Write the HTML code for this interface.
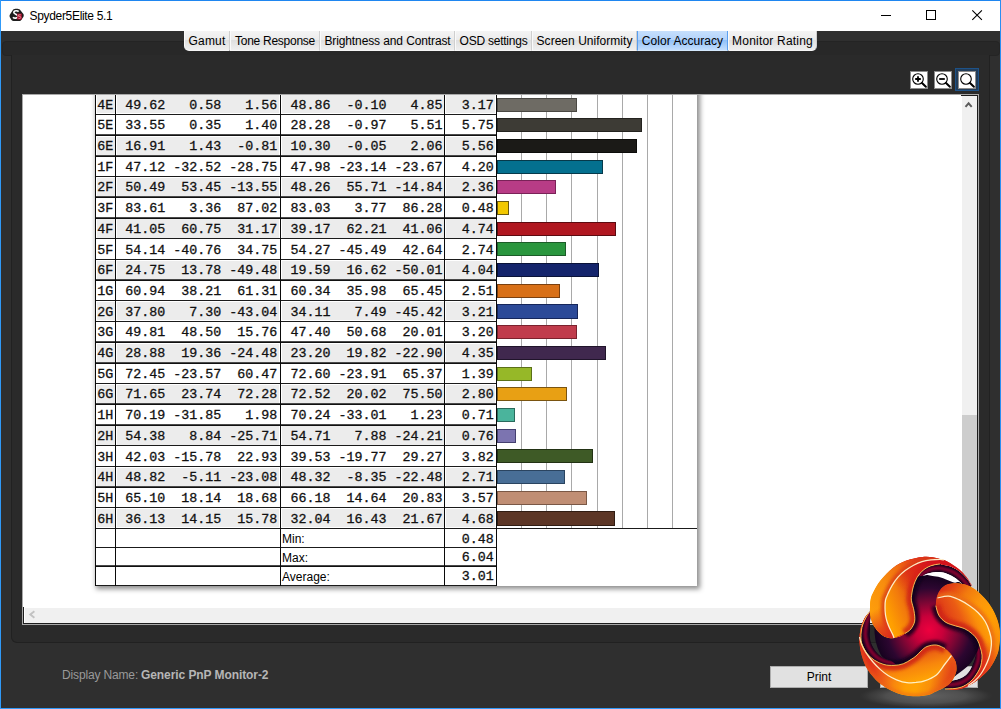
<!DOCTYPE html>
<html><head><meta charset="utf-8"><title>Spyder5Elite 5.1</title>
<style>
html,body{margin:0;padding:0;}
body{width:1001px;height:709px;overflow:hidden;background:#2f2f2f;font-family:"Liberation Sans",sans-serif;position:relative;}
.abs,#w *{position:absolute;box-sizing:border-box;}
#w{position:absolute;left:0;top:0;width:1001px;height:709px;overflow:hidden;background:#2f2f2f;}
/* window frame */
#bt{left:0;top:0;width:1001px;height:1px;background:#1f86f0;}
#bl{left:0;top:0;width:1px;height:709px;background:#309af8;}
#br{left:1000px;top:0;width:1px;height:709px;background:#2a8ef2;}
#bb{left:0;top:708px;width:1001px;height:1px;background:#309af8;}
#title{left:1px;top:1px;width:999px;height:30px;background:#fff;}
#ttext{left:29.5px;top:9px;font-size:12px;line-height:14px;color:#000;white-space:nowrap;letter-spacing:-0.32px;}
/* tab strip */
#strip{left:2px;top:41px;width:998px;height:15px;background:#282828;border-radius:4px;border:1px solid #242424;}
#panel{left:11px;top:55px;width:979px;height:588px;background:#2a2a2a;border-radius:0 0 6px 6px;border:1px solid #212121;border-top:none;}
.tab{top:31px;height:20px;font-size:12px;line-height:21px;color:#000;white-space:nowrap;text-align:center;
 background:linear-gradient(#f4f4f4 0%,#ececec 45%,#dedede 45%,#efefef 100%);border-left:1px solid #fafafa;border-right:1px solid #cfcfcf;border-bottom:1px solid #f6f6f6;}
.tab.sel{background:linear-gradient(#c6dffc 0%,#b4d4fb 45%,#8cbef7 45%,#c4defc 100%);border-left:1px solid #5a9ff0;border-right:1px solid #5a9ff0;border-bottom:1px solid #d4e8fd;}
.tab span{position:static !important;display:inline-block;}
/* zoom buttons */
.zb{width:18px;height:18px;top:71px;background:#fff;border:1px solid #8a8a8a;}
#zsel{left:955px;top:68px;width:24px;height:23px;background:#223d5a;border:1px solid #1d5288;}
/* viewport */
#frame{left:22px;top:94px;width:957px;height:531px;background:#fff;border:1px solid #a8a8a8;}
#vp{left:23px;top:95px;width:938px;height:512px;background:#fff;overflow:hidden;}
#vsb{left:961px;top:95px;width:17px;height:512px;background:#fff;border-top:1px solid #1c1c1c;border-right:1px solid #1c1c1c;}
#vtrack{left:962px;top:96px;width:15px;height:511px;background:#f0f0f0;}
#vthumb{left:962px;top:415px;width:15px;height:175px;background:#cdcdcd;}
#hsb{left:23px;top:607px;width:955px;height:17px;background:#fff;border-left:1px solid #1c1c1c;border-bottom:1px solid #1c1c1c;}
#htrack{left:25px;top:608px;width:937px;height:15px;background:#f0f0f0;}
/* table */
#page{left:72px;top:-20px;width:602.3px;height:511.3px;background:#fff;box-shadow:2px 2px 5px 1px rgba(0,0,0,.45);}
.r{left:72px;width:610px;height:20.7px;font-family:"Liberation Mono",monospace;font-size:13.33px;}
.r b{font-weight:normal;-webkit-text-stroke:0.3px #111;top:1px;height:20.7px;line-height:21.7px;color:#111;white-space:pre;text-align:right;}
.r .f{top:1.6px;height:18.2px;background:transparent;}
.r.g .f{background:#ececec;}
.f1{left:1.6px;width:18px;}.f2{left:21.8px;width:162.5px;}.f3{left:187px;width:161.5px;}.f4{left:351.4px;width:49px;}
.l{left:2.2px;width:17px;text-align:left !important;}
.a1{left:20px;width:50.2px}.a2{left:20px;width:106.2px}.a3{left:20px;width:162.2px}
.b1{left:185px;width:50.5px}.b2{left:185px;width:106.5px}.b3{left:185px;width:162.5px}
.d{left:350px;width:48.8px}
.r u{left:401.8px;top:3.9px;height:14.1px;border:1px solid #000;text-decoration:none;}
.hl{height:1.6px;background:linear-gradient(#7a7a7a,#111 55%);}
.vl{width:1px;background:#0a0a0a;}
.gl{width:1px;background:#a9a9a9;}
.sum{font-size:12px;line-height:14px;color:#000;white-space:nowrap;}
.sv{-webkit-text-stroke:0.3px #111;font-family:"Liberation Mono",monospace;font-size:13.33px;line-height:15px;color:#111;text-align:right;width:48.8px;left:422px;}
/* bottom */
.dnn{top:668px;font-size:12px;line-height:14px;white-space:nowrap;}
#dn{left:62px;color:#9a9a9a;letter-spacing:-0.15px;}
#dn2{left:141px;color:#b6b6b6;font-weight:bold;letter-spacing:-0.08px;}
.btn{top:666px;height:22px;background:#e1e1e1;border:1px solid #adadad;font-size:12px;line-height:21px;text-align:center;color:#000;}
</style></head>
<body>
<div id="w">
<div id="title"></div>
<div id="bt"></div><div id="bl"></div><div id="br"></div><div id="bb"></div>
<svg style="left:9px;top:8px" width="16" height="14" viewBox="0 0 16 14">
<path d="M4.2 1.6 C5.5 0.3 9.5 0.3 10.8 1.6 L14.4 6 C15 7 14.8 8.6 14 9.6 L12 12.2 C11.4 12.9 10.6 13.1 9.8 13.1 L4.6 13.1 C3.8 13.1 3 12.7 2.5 12 L1 9.4 C0.4 8.4 0.4 7.2 1.1 6.2 Z" fill="#1e1e1e"/>
<path d="M9.6 3.6 C8.6 2.4 5.2 2.4 4.8 4.2 C4.4 6.2 9.4 6.2 9 8.6 C8.6 10.6 5 10.4 4 9.2" stroke="#fff" stroke-width="1.7" fill="none"/>
<rect x="8.2" y="5.6" width="4.6" height="6" fill="#a80c28"/>
<path d="M11.8 6.8h-2.2v1.6h1.6c.8 0 .8 2-.2 2h-1.6" stroke="#e8a0a8" stroke-width=".8" fill="none"/>
</svg>
<div id="ttext">Spyder5Elite 5.1</div>
<svg style="left:870px;top:1px" width="130" height="30" viewBox="870 1 130 30">
<path d="M881 15.5h10" stroke="#000" stroke-width="1" fill="none"/>
<rect x="926.5" y="10.5" width="9" height="9" stroke="#000" stroke-width="1" fill="none"/>
<path d="M972.3 10.3l9.6 9.6M981.9 10.3l-9.6 9.6" stroke="#000" stroke-width="1.1" fill="none"/>
</svg>
<div id="strip"></div>
<div id="panel"></div>
<div class="tab" style="left:184px;width:46px;border-bottom-left-radius:5px;"><span class="tl" style="letter-spacing:0.15px">Gamut</span></div>
<div class="tab" style="left:230px;width:90px;"><span class="tl" style="letter-spacing:-0.26px">Tone Response</span></div>
<div class="tab" style="left:320px;width:135px;"><span class="tl" style="letter-spacing:-0.11px">Brightness and Contrast</span></div>
<div class="tab" style="left:455px;width:77px;"><span class="tl" style="letter-spacing:-0.24px">OSD settings</span></div>
<div class="tab" style="left:532px;width:105px;"><span class="tl" style="letter-spacing:0.03px">Screen Uniformity</span></div>
<div class="tab sel" style="left:637px;width:91px;"><span class="tl" style="letter-spacing:0.04px">Color Accuracy</span></div>
<div class="tab" style="left:728px;width:89px;border-bottom-right-radius:5px;"><span class="tl" style="letter-spacing:0.2px">Monitor Rating</span></div>
<div id="zsel"></div><svg style="left:910px;top:71px" width="18" height="18" viewBox="0 0 18 18"><rect x="0" y="0" width="18" height="18" fill="#fff"/><rect x=".5" y=".5" width="17" height="17" fill="none" stroke="#8c8c8c"/><circle cx="8" cy="8" r="5.3" fill="none" stroke="#000" stroke-width="1.1"/><path d="M12 12l3.9 3.8" stroke="#000" stroke-width="2" stroke-linecap="round"/><path d="M5.2 8h5.6M8 5.2v5.6" stroke="#000" stroke-width="1.8"/></svg><svg style="left:934px;top:71px" width="18" height="18" viewBox="0 0 18 18"><rect x="0" y="0" width="18" height="18" fill="#fff"/><rect x=".5" y=".5" width="17" height="17" fill="none" stroke="#8c8c8c"/><circle cx="8" cy="8" r="5.3" fill="none" stroke="#000" stroke-width="1.1"/><path d="M12 12l3.9 3.8" stroke="#000" stroke-width="2" stroke-linecap="round"/><path d="M5.2 8h5.6" stroke="#000" stroke-width="1.8"/></svg><svg style="left:958px;top:71px" width="18" height="18" viewBox="0 0 18 18"><rect x="0" y="0" width="18" height="18" fill="#fff"/><rect x=".5" y=".5" width="17" height="17" fill="none" stroke="#8c8c8c"/><circle cx="8" cy="8" r="5.3" fill="none" stroke="#000" stroke-width="1.1"/><path d="M12 12l3.9 3.8" stroke="#000" stroke-width="2" stroke-linecap="round"/></svg>
<div id="frame"></div>
<div id="vp">
<div id="page"></div>
<div class="gl" style="left:498.1px;top:0;height:433.3px"></div>
<div class="gl" style="left:523.2px;top:0;height:433.3px"></div>
<div class="gl" style="left:548.4px;top:0;height:433.3px"></div>
<div class="gl" style="left:573.6px;top:0;height:433.3px"></div>
<div class="gl" style="left:598.8px;top:0;height:433.3px"></div>
<div class="gl" style="left:623.9px;top:0;height:433.3px"></div>
<div class="gl" style="left:649.1px;top:0;height:433.3px"></div>
<div class="r g" style="top:-1.4px"><i class="f f1"></i><i class="f f2"></i><i class="f f3"></i><i class="f f4"></i><b class="l">4E</b><b class="a1">49.62</b><b class="a2">0.58</b><b class="a3">1.56</b><b class="b1">48.86</b><b class="b2">-0.10</b><b class="b3">4.85</b><b class="d">3.17</b><u style="width:80.0px;background:#6e6b64;border-color:#4a4843"></u></div>
<div class="r" style="top:19.3px"><i class="f f1"></i><i class="f f2"></i><i class="f f3"></i><i class="f f4"></i><b class="l">5E</b><b class="a1">33.55</b><b class="a2">0.35</b><b class="a3">1.40</b><b class="b1">28.28</b><b class="b2">-0.97</b><b class="b3">5.51</b><b class="d">5.75</b><u style="width:144.9px;background:#3d3b35;border-color:#24231f"></u></div>
<div class="r g" style="top:40.0px"><i class="f f1"></i><i class="f f2"></i><i class="f f3"></i><i class="f f4"></i><b class="l">6E</b><b class="a1">16.91</b><b class="a2">1.43</b><b class="a3">-0.81</b><b class="b1">10.30</b><b class="b2">-0.05</b><b class="b3">2.06</b><b class="d">5.56</b><u style="width:140.1px;background:#1b1a17;border-color:#0c0c0a"></u></div>
<div class="r" style="top:60.7px"><i class="f f1"></i><i class="f f2"></i><i class="f f3"></i><i class="f f4"></i><b class="l">1F</b><b class="a1">47.12</b><b class="a2">-32.52</b><b class="a3">-28.75</b><b class="b1">47.98</b><b class="b2">-23.14</b><b class="b3">-23.67</b><b class="d">4.20</b><u style="width:105.9px;background:#04708f;border-color:#06394a"></u></div>
<div class="r g" style="top:81.4px"><i class="f f1"></i><i class="f f2"></i><i class="f f3"></i><i class="f f4"></i><b class="l">2F</b><b class="a1">50.49</b><b class="a2">53.45</b><b class="a3">-13.55</b><b class="b1">48.26</b><b class="b2">55.71</b><b class="b3">-14.84</b><b class="d">2.36</b><u style="width:59.6px;background:#b83c86;border-color:#7a2258"></u></div>
<div class="r" style="top:102.1px"><i class="f f1"></i><i class="f f2"></i><i class="f f3"></i><i class="f f4"></i><b class="l">3F</b><b class="a1">83.61</b><b class="a2">3.36</b><b class="a3">87.02</b><b class="b1">83.03</b><b class="b2">3.77</b><b class="b3">86.28</b><b class="d">0.48</b><u style="width:12.3px;background:#f2c800;border-color:#6a5a10"></u></div>
<div class="r g" style="top:122.8px"><i class="f f1"></i><i class="f f2"></i><i class="f f3"></i><i class="f f4"></i><b class="l">4F</b><b class="a1">41.05</b><b class="a2">60.75</b><b class="a3">31.17</b><b class="b1">39.17</b><b class="b2">62.21</b><b class="b3">41.06</b><b class="d">4.74</b><u style="width:119.5px;background:#b01720;border-color:#5c0a10"></u></div>
<div class="r" style="top:143.5px"><i class="f f1"></i><i class="f f2"></i><i class="f f3"></i><i class="f f4"></i><b class="l">5F</b><b class="a1">54.14</b><b class="a2">-40.76</b><b class="a3">34.75</b><b class="b1">54.27</b><b class="b2">-45.49</b><b class="b3">42.64</b><b class="d">2.74</b><u style="width:69.2px;background:#2a963e;border-color:#1c5c28"></u></div>
<div class="r g" style="top:164.2px"><i class="f f1"></i><i class="f f2"></i><i class="f f3"></i><i class="f f4"></i><b class="l">6F</b><b class="a1">24.75</b><b class="a2">13.78</b><b class="a3">-49.48</b><b class="b1">19.59</b><b class="b2">16.62</b><b class="b3">-50.01</b><b class="d">4.04</b><u style="width:101.9px;background:#14246c;border-color:#0a1238"></u></div>
<div class="r" style="top:184.9px"><i class="f f1"></i><i class="f f2"></i><i class="f f3"></i><i class="f f4"></i><b class="l">1G</b><b class="a1">60.94</b><b class="a2">38.21</b><b class="a3">61.31</b><b class="b1">60.34</b><b class="b2">35.98</b><b class="b3">65.45</b><b class="d">2.51</b><u style="width:63.4px;background:#d87018;border-color:#7a4010"></u></div>
<div class="r g" style="top:205.6px"><i class="f f1"></i><i class="f f2"></i><i class="f f3"></i><i class="f f4"></i><b class="l">2G</b><b class="a1">37.80</b><b class="a2">7.30</b><b class="a3">-43.04</b><b class="b1">34.11</b><b class="b2">7.49</b><b class="b3">-45.42</b><b class="d">3.21</b><u style="width:81.0px;background:#2c4a98;border-color:#16265a"></u></div>
<div class="r" style="top:226.3px"><i class="f f1"></i><i class="f f2"></i><i class="f f3"></i><i class="f f4"></i><b class="l">3G</b><b class="a1">49.81</b><b class="a2">48.50</b><b class="a3">15.76</b><b class="b1">47.40</b><b class="b2">50.68</b><b class="b3">20.01</b><b class="d">3.20</b><u style="width:80.7px;background:#c03c4c;border-color:#7a222e"></u></div>
<div class="r g" style="top:247.0px"><i class="f f1"></i><i class="f f2"></i><i class="f f3"></i><i class="f f4"></i><b class="l">4G</b><b class="a1">28.88</b><b class="a2">19.36</b><b class="a3">-24.48</b><b class="b1">23.20</b><b class="b2">19.82</b><b class="b3">-22.90</b><b class="d">4.35</b><u style="width:109.7px;background:#40284e;border-color:#20142a"></u></div>
<div class="r" style="top:267.7px"><i class="f f1"></i><i class="f f2"></i><i class="f f3"></i><i class="f f4"></i><b class="l">5G</b><b class="a1">72.45</b><b class="a2">-23.57</b><b class="a3">60.47</b><b class="b1">72.60</b><b class="b2">-23.91</b><b class="b3">65.37</b><b class="d">1.39</b><u style="width:35.2px;background:#96b828;border-color:#5a7018"></u></div>
<div class="r g" style="top:288.4px"><i class="f f1"></i><i class="f f2"></i><i class="f f3"></i><i class="f f4"></i><b class="l">6G</b><b class="a1">71.65</b><b class="a2">23.74</b><b class="a3">72.28</b><b class="b1">72.52</b><b class="b2">20.02</b><b class="b3">75.50</b><b class="d">2.80</b><u style="width:70.7px;background:#e8a014;border-color:#7a5410"></u></div>
<div class="r" style="top:309.1px"><i class="f f1"></i><i class="f f2"></i><i class="f f3"></i><i class="f f4"></i><b class="l">1H</b><b class="a1">70.19</b><b class="a2">-31.85</b><b class="a3">1.98</b><b class="b1">70.24</b><b class="b2">-33.01</b><b class="b3">1.23</b><b class="d">0.71</b><u style="width:18.1px;background:#4ab49c;border-color:#2a6a5c"></u></div>
<div class="r g" style="top:329.8px"><i class="f f1"></i><i class="f f2"></i><i class="f f3"></i><i class="f f4"></i><b class="l">2H</b><b class="a1">54.38</b><b class="a2">8.84</b><b class="a3">-25.71</b><b class="b1">54.71</b><b class="b2">7.88</b><b class="b3">-24.21</b><b class="d">0.76</b><u style="width:19.3px;background:#7c74b0;border-color:#454070"></u></div>
<div class="r" style="top:350.5px"><i class="f f1"></i><i class="f f2"></i><i class="f f3"></i><i class="f f4"></i><b class="l">3H</b><b class="a1">42.03</b><b class="a2">-15.78</b><b class="a3">22.93</b><b class="b1">39.53</b><b class="b2">-19.77</b><b class="b3">29.27</b><b class="d">3.82</b><u style="width:96.3px;background:#3e5a26;border-color:#223214"></u></div>
<div class="r g" style="top:371.2px"><i class="f f1"></i><i class="f f2"></i><i class="f f3"></i><i class="f f4"></i><b class="l">4H</b><b class="a1">48.82</b><b class="a2">-5.11</b><b class="a3">-23.08</b><b class="b1">48.32</b><b class="b2">-8.35</b><b class="b3">-22.48</b><b class="d">2.71</b><u style="width:68.4px;background:#486e96;border-color:#2a4460"></u></div>
<div class="r" style="top:391.9px"><i class="f f1"></i><i class="f f2"></i><i class="f f3"></i><i class="f f4"></i><b class="l">5H</b><b class="a1">65.10</b><b class="a2">18.14</b><b class="a3">18.68</b><b class="b1">66.18</b><b class="b2">14.64</b><b class="b3">20.83</b><b class="d">3.57</b><u style="width:90.1px;background:#c08e74;border-color:#7a5846"></u></div>
<div class="r g" style="top:412.6px"><i class="f f1"></i><i class="f f2"></i><i class="f f3"></i><i class="f f4"></i><b class="l">6H</b><b class="a1">36.13</b><b class="a2">14.15</b><b class="a3">15.78</b><b class="b1">32.04</b><b class="b2">16.43</b><b class="b3">21.67</b><b class="d">4.68</b><u style="width:118.0px;background:#5c3626;border-color:#301c12"></u></div>
<div class="hl" style="left:72px;top:18.6px;width:402px"></div>
<div class="hl" style="left:72px;top:39.3px;width:402px"></div>
<div class="hl" style="left:72px;top:60.0px;width:402px"></div>
<div class="hl" style="left:72px;top:80.7px;width:402px"></div>
<div class="hl" style="left:72px;top:101.4px;width:402px"></div>
<div class="hl" style="left:72px;top:122.1px;width:402px"></div>
<div class="hl" style="left:72px;top:142.8px;width:402px"></div>
<div class="hl" style="left:72px;top:163.5px;width:402px"></div>
<div class="hl" style="left:72px;top:184.2px;width:402px"></div>
<div class="hl" style="left:72px;top:204.9px;width:402px"></div>
<div class="hl" style="left:72px;top:225.6px;width:402px"></div>
<div class="hl" style="left:72px;top:246.3px;width:402px"></div>
<div class="hl" style="left:72px;top:267.0px;width:402px"></div>
<div class="hl" style="left:72px;top:287.7px;width:402px"></div>
<div class="hl" style="left:72px;top:308.4px;width:402px"></div>
<div class="hl" style="left:72px;top:329.1px;width:402px"></div>
<div class="hl" style="left:72px;top:349.8px;width:402px"></div>
<div class="hl" style="left:72px;top:370.5px;width:402px"></div>
<div class="hl" style="left:72px;top:391.2px;width:402px"></div>
<div class="hl" style="left:72px;top:411.9px;width:402px"></div>
<div class="hl" style="left:72px;top:432.6px;width:602.3px"></div>
<div class="hl" style="left:72px;top:451.5px;width:402px"></div>
<div class="hl" style="left:72px;top:470.4px;width:402px"></div>
<div class="hl" style="left:72px;top:489.6px;width:402px"></div>
<div class="vl" style="left:72.0px;width:1px;top:0;height:491.1px"></div>
<div class="vl" style="left:92.0px;width:1px;top:0;height:491.1px"></div>
<div class="vl" style="left:256.8px;width:1.4px;top:0;height:491.1px"></div>
<div class="vl" style="left:421.1px;width:1.4px;top:0;height:491.1px"></div>
<div class="vl" style="left:472.8px;width:1.3px;top:0;height:491.1px"></div>
<div class="sum" style="left:259px;top:437.3px">Min:</div>
<div class="sum" style="left:259px;top:456.0px">Max:</div>
<div class="sum" style="left:259px;top:474.6px">Average:</div>
<div class="sv" style="top:436.5px">0.48</div>
<div class="sv" style="top:455.2px">6.04</div>
<div class="sv" style="top:473.8px">3.01</div>
</div>
<div id="vsb"></div><div id="vtrack"></div><div id="vthumb"></div>
<div id="hsb"></div><div id="htrack"></div>
<svg style="left:962px;top:96px" width="15" height="17" viewBox="0 0 15 17"><path d="M3.5 10.9L6.6 7.3L9.7 10.9" stroke="#5c5c5c" stroke-width="1.9" fill="none"/></svg>
<svg style="left:25px;top:608px" width="15" height="15" viewBox="0 0 15 15"><path d="M9.4 3.3L5.3 6.5L9.4 9.7" stroke="#c2c2c2" stroke-width="1.9" fill="none"/></svg>
<div id="dn" class="dnn">Display Name:</div><div id="dn2" class="dnn">Generic PnP Monitor-2</div>
<div class="btn" style="left:770px;width:98px;">Print</div>
<div class="btn" style="left:880px;width:98px;"></div>
<svg style="left:850px;top:548px" width="151" height="161" viewBox="850 548 151 161">
<defs>
<radialGradient id="gsh" cx="0.5" cy="0.5" r="0.5"><stop offset="0" stop-color="#626262" stop-opacity="1"/><stop offset=".6" stop-color="#525252" stop-opacity=".9"/><stop offset=".85" stop-color="#444" stop-opacity=".5"/><stop offset="1" stop-color="#3a3a3a" stop-opacity="0"/></radialGradient>
<radialGradient id="gbody" gradientUnits="userSpaceOnUse" cx="929" cy="630" r="56"><stop offset="0" stop-color="#ee003e"/><stop offset=".25" stop-color="#c8003a"/><stop offset=".5" stop-color="#7a0634"/><stop offset=".75" stop-color="#2c0630"/><stop offset="1" stop-color="#12021c"/></radialGradient>
<linearGradient id="gAo" gradientUnits="userSpaceOnUse" x1="868" y1="620" x2="960" y2="566"><stop offset="0" stop-color="#ffa20a"/><stop offset=".3" stop-color="#f88e0e"/><stop offset=".48" stop-color="#f07012"/><stop offset=".62" stop-color="#e74618"/><stop offset=".75" stop-color="#de2a1a"/><stop offset="1" stop-color="#c8121c"/></linearGradient>
<linearGradient id="gAi" gradientUnits="userSpaceOnUse" x1="886" y1="610" x2="918" y2="598"><stop offset="0" stop-color="#ffa000"/><stop offset=".5" stop-color="#f27a0c"/><stop offset="1" stop-color="#de4214"/></linearGradient>
<linearGradient id="gAt" gradientUnits="userSpaceOnUse" x1="903" y1="592" x2="930" y2="563"><stop offset="0" stop-color="#dc2418" stop-opacity="0"/><stop offset=".6" stop-color="#dc2018" stop-opacity=".75"/><stop offset="1" stop-color="#d4141c" stop-opacity="1"/></linearGradient>
<linearGradient id="gBo" gradientUnits="userSpaceOnUse" x1="938" y1="590" x2="1000" y2="640"><stop offset="0" stop-color="#dc2c18"/><stop offset=".12" stop-color="#e44616"/><stop offset=".3" stop-color="#f27a0e"/><stop offset=".5" stop-color="#fc960a"/><stop offset=".7" stop-color="#ffa004"/><stop offset="1" stop-color="#fb900a"/></linearGradient>
<linearGradient id="gBi" gradientUnits="userSpaceOnUse" x1="983" y1="611" x2="949" y2="627"><stop offset="0" stop-color="#ffa604"/><stop offset=".28" stop-color="#fa8e0a"/><stop offset=".6" stop-color="#eb5c14"/><stop offset="1" stop-color="#de3a18"/></linearGradient>
<linearGradient id="gCo" gradientUnits="userSpaceOnUse" x1="956" y1="672" x2="858" y2="646"><stop offset="0" stop-color="#de341a"/><stop offset=".1" stop-color="#ea5a14"/><stop offset=".22" stop-color="#f9900a"/><stop offset=".34" stop-color="#ffa204"/><stop offset=".44" stop-color="#ffa004"/><stop offset=".56" stop-color="#f8880e"/><stop offset=".68" stop-color="#ee5e18"/><stop offset=".8" stop-color="#e4381a"/><stop offset=".88" stop-color="#df2a1a"/><stop offset="1" stop-color="#d81c1c"/></linearGradient>
<linearGradient id="gAh" gradientUnits="userSpaceOnUse" x1="871" y1="612" x2="886" y2="640"><stop offset="0" stop-color="#e0381a" stop-opacity="0"/><stop offset=".6" stop-color="#e0381a" stop-opacity=".8"/><stop offset="1" stop-color="#dc2c1a" stop-opacity="1"/></linearGradient>
<linearGradient id="gBt" gradientUnits="userSpaceOnUse" x1="996" y1="645" x2="972" y2="686"><stop offset="0" stop-color="#e0301a" stop-opacity="0"/><stop offset=".55" stop-color="#e0301a" stop-opacity=".85"/><stop offset="1" stop-color="#d41a1c" stop-opacity="1"/></linearGradient>
<linearGradient id="gCi" gradientUnits="userSpaceOnUse" x1="928" y1="680" x2="920" y2="648"><stop offset="0" stop-color="#ffa604"/><stop offset=".45" stop-color="#f8860c"/><stop offset="1" stop-color="#e24c16"/></linearGradient>
<filter id="b1" x="-20%" y="-20%" width="140%" height="140%"><feGaussianBlur stdDeviation="1.6"/></filter>
<filter id="b2" x="-20%" y="-20%" width="140%" height="140%"><feGaussianBlur stdDeviation="0.9"/></filter>
<clipPath id="cA"><path d="M971.5 585.0C970.8 583.9 969.1 580.7 967.5 578.5C965.9 576.3 963.9 573.9 962.0 572.0C960.1 570.1 958.0 568.5 956.0 567.0C954.0 565.5 952.0 564.2 950.0 563.0C948.0 561.8 946.8 560.9 944.0 560.0C941.2 559.1 937.1 557.9 933.5 557.4C929.9 556.9 926.9 556.4 922.3 557.0C917.7 557.6 910.7 559.0 905.8 560.8C900.9 562.6 897.3 564.5 893.1 567.8C888.9 571.1 883.8 576.3 880.4 580.5C877.0 584.7 874.4 590.0 872.8 593.2C871.1 596.5 871.0 597.6 870.5 600.0C870.0 602.4 870.1 605.2 870.0 607.5C869.9 609.8 869.8 611.8 870.0 614.0C870.2 616.2 870.8 618.8 871.5 621.0C872.2 623.2 873.3 625.2 874.5 627.0C875.7 628.8 877.2 630.7 878.5 632.0C879.8 633.3 880.8 634.1 882.0 635.0C883.2 635.9 884.2 636.7 886.0 637.2C887.8 637.7 890.2 638.3 892.5 638.2C894.8 638.1 897.9 637.3 900.0 636.5C902.1 635.7 904.2 634.0 905.0 633.5L905.0 633.5C906.0 632.8 909.3 631.1 910.9 629.0C912.5 626.9 914.2 624.1 914.7 621.1C915.2 618.1 914.5 614.3 914.0 610.9C913.5 607.5 911.9 603.6 911.5 600.8C911.1 598.0 911.4 596.5 911.8 594.0C912.1 591.5 912.7 588.4 913.6 585.6C914.5 582.8 915.8 579.6 917.2 577.2C918.6 574.8 920.2 572.9 922.0 571.2C923.8 569.5 926.0 568.0 928.0 567.0C930.0 566.0 932.0 565.4 934.0 564.9C936.0 564.4 939.0 564.1 940.0 564.0L940.0 564.0C940.4 564.1 940.8 564.3 942.5 564.7C944.2 565.1 947.5 565.3 950.0 566.2C952.5 567.1 955.2 568.5 957.5 570.0C959.8 571.5 962.1 573.6 964.0 575.5C965.9 577.4 967.8 579.8 969.0 581.5C970.2 583.2 971.1 585.2 971.5 586.0Z"/></clipPath>
<clipPath id="cB"><path d="M945.0 689.0C946.2 689.1 950.0 689.7 952.5 689.7C955.0 689.7 957.6 689.5 960.0 689.0C962.4 688.5 964.7 687.6 967.0 686.5C969.3 685.4 971.8 683.9 974.0 682.5C976.2 681.1 978.2 679.5 980.0 678.0C981.8 676.5 983.3 675.2 985.0 673.5C986.7 671.8 988.3 670.3 990.0 668.0C991.7 665.7 993.6 662.3 995.0 659.5C996.4 656.7 997.5 654.7 998.4 651.0C999.2 647.3 1000.0 641.2 1000.1 637.2C1000.2 633.2 999.9 630.3 999.2 626.7C998.5 623.1 997.5 619.3 995.7 615.4C994.0 611.5 991.3 606.8 988.7 603.1C986.1 599.5 983.0 596.3 980.0 593.5C977.0 590.7 973.8 588.2 970.4 586.5C967.0 584.8 963.5 583.8 959.9 583.4C956.2 583.0 951.6 583.1 948.5 583.9C945.4 584.7 943.4 586.2 941.5 588.2C939.6 590.2 938.1 593.2 937.1 596.1C936.1 599.0 936.0 604.1 935.8 605.7L935.8 605.7C936.3 607.3 937.2 612.6 938.9 615.4C940.6 618.2 943.1 620.6 945.9 622.4C948.7 624.1 952.5 624.9 955.5 625.9C958.5 626.9 961.4 627.2 964.2 628.5C967.0 629.8 969.9 631.8 972.1 633.7C974.3 635.6 976.0 637.6 977.4 639.9C978.8 642.2 979.5 645.0 980.3 647.5C981.1 650.0 981.8 652.5 982.0 655.0C982.2 657.5 981.9 660.2 981.5 662.5C981.1 664.8 980.6 666.7 979.5 669.0C978.4 671.3 976.6 674.3 975.0 676.5C973.4 678.7 972.0 680.3 970.0 682.0C968.0 683.7 965.5 685.4 963.0 686.5C960.5 687.6 958.0 688.1 955.0 688.5C952.0 688.9 946.7 688.9 945.0 689.0Z"/></clipPath>
<clipPath id="cC"><path d="M869.5 612.0C868.8 612.9 866.2 615.5 865.0 617.5C863.8 619.5 862.8 621.8 862.0 624.0C861.2 626.2 860.6 628.3 860.2 631.0C859.8 633.7 859.3 636.4 859.4 640.0C859.5 643.6 860.0 648.5 861.0 652.7C862.0 656.9 863.5 661.6 865.3 665.4C867.1 669.2 869.5 672.4 872.0 675.5C874.5 678.6 877.2 681.5 880.5 684.0C883.8 686.5 887.7 689.0 891.5 690.8C895.3 692.6 899.3 694.1 903.4 695.0C907.5 695.9 912.4 696.2 916.0 696.3C919.6 696.4 922.5 695.9 925.0 695.5C927.5 695.1 929.5 694.5 931.2 693.9C932.9 693.3 933.1 692.9 935.0 692.0C936.9 691.1 940.3 689.7 942.5 688.5C944.7 687.3 946.2 686.5 948.0 685.0C949.8 683.5 951.7 681.6 953.0 679.5C954.3 677.4 955.4 674.4 956.0 672.5C956.6 670.6 956.5 669.6 956.5 668.0C956.5 666.4 956.4 664.6 956.0 663.0C955.6 661.4 955.0 660.2 954.0 658.5C953.0 656.8 951.5 654.7 950.0 653.0C948.5 651.3 945.8 649.2 945.0 648.5L945.0 648.5C943.6 647.9 939.4 645.3 936.4 645.0C933.4 644.7 929.6 645.5 927.0 646.5C924.4 647.5 922.8 649.4 921.0 651.0C919.2 652.6 917.7 654.6 916.0 656.0C914.3 657.4 913.1 658.2 911.0 659.5C908.9 660.8 906.2 662.7 903.4 663.7C900.6 664.7 897.2 665.3 894.0 665.4C890.8 665.5 887.2 665.4 884.0 664.5C880.8 663.6 877.4 662.1 874.6 660.3C871.8 658.5 869.1 656.2 867.0 653.5C864.9 650.8 863.0 646.9 862.0 644.2C861.0 641.5 861.1 639.7 861.0 637.5C860.9 635.3 861.0 633.2 861.3 631.0C861.6 628.8 862.2 626.2 863.0 624.0C863.8 621.8 864.9 619.5 866.0 617.5C867.1 615.5 868.9 612.9 869.5 612.0Z"/></clipPath>
<clipPath id="cAb"><path d="M944.0 560.0C942.2 559.6 937.1 557.9 933.5 557.4C929.9 556.9 926.9 556.4 922.3 557.0C917.7 557.6 910.7 559.0 905.8 560.8C900.9 562.6 897.3 564.5 893.1 567.8C888.9 571.1 883.8 576.3 880.4 580.5C877.0 584.7 874.4 590.0 872.8 593.2C871.1 596.5 871.0 597.6 870.5 600.0C870.0 602.4 870.1 605.2 870.0 607.5C869.9 609.8 869.8 611.8 870.0 614.0C870.2 616.2 870.8 618.8 871.5 621.0C872.2 623.2 873.3 625.2 874.5 627.0C875.7 628.8 877.2 630.7 878.5 632.0C879.8 633.3 880.8 634.1 882.0 635.0C883.2 635.9 884.2 636.7 886.0 637.2C887.8 637.7 890.2 638.3 892.5 638.2C894.8 638.1 897.9 637.3 900.0 636.5C902.1 635.7 904.2 634.0 905.0 633.5L894.0 638.0C893.8 637.3 893.2 635.7 892.5 634.0C891.8 632.3 890.4 630.1 889.5 628.0C888.6 625.9 887.7 623.7 887.0 621.5C886.3 619.3 885.8 617.3 885.5 615.0C885.2 612.7 885.0 610.0 885.0 607.5C885.0 605.0 885.0 602.2 885.5 600.0C886.0 597.8 886.7 596.4 887.8 594.0C888.9 591.6 890.3 588.4 892.0 585.6C893.7 582.8 895.8 579.7 898.0 577.2C900.2 574.7 902.6 572.6 905.2 570.6C907.8 568.6 910.8 566.7 913.6 565.2C916.4 563.7 919.1 562.5 922.0 561.6C924.9 560.7 928.0 560.2 931.0 559.8C934.0 559.4 937.8 559.3 940.0 559.3C942.2 559.3 943.3 559.9 944.0 560.0Z"/></clipPath><clipPath id="cBb"><path d="M945.0 689.0C946.2 689.1 950.0 689.7 952.5 689.7C955.0 689.7 957.6 689.5 960.0 689.0C962.4 688.5 964.7 687.6 967.0 686.5C969.3 685.4 971.8 683.9 974.0 682.5C976.2 681.1 978.2 679.5 980.0 678.0C981.8 676.5 983.3 675.2 985.0 673.5C986.7 671.8 988.3 670.3 990.0 668.0C991.7 665.7 993.6 662.3 995.0 659.5C996.4 656.7 997.5 654.7 998.4 651.0C999.2 647.3 1000.0 641.2 1000.1 637.2C1000.2 633.2 999.9 630.3 999.2 626.7C998.5 623.1 997.5 619.3 995.7 615.4C994.0 611.5 991.3 606.8 988.7 603.1C986.1 599.5 983.0 596.3 980.0 593.5C977.0 590.7 973.8 588.2 970.4 586.5C967.0 584.8 963.5 583.8 959.9 583.4C956.2 583.0 951.6 583.1 948.5 583.9C945.4 584.7 943.4 586.2 941.5 588.2C939.6 590.2 938.1 593.2 937.1 596.1C936.1 599.0 936.0 604.1 935.8 605.7L937.5 598.0C939.3 597.7 944.9 595.8 948.5 596.1C952.1 596.4 955.5 598.0 959.0 599.6C962.5 601.2 966.3 603.5 969.5 605.7C972.7 607.9 975.6 610.1 978.2 612.7C980.8 615.3 983.3 618.3 985.2 621.5C987.1 624.7 988.6 628.8 989.6 632.0C990.6 635.2 991.2 638.0 991.4 641.0C991.6 644.0 991.3 647.0 990.8 650.0C990.3 653.0 989.5 656.2 988.5 659.0C987.5 661.8 986.3 664.4 985.0 667.0C983.7 669.6 982.2 672.2 980.5 674.5C978.8 676.8 977.1 678.7 975.0 680.5C972.9 682.3 969.2 684.7 968.0 685.5Z"/></clipPath><clipPath id="cCb"><path d="M869.5 612.0C868.8 612.9 866.2 615.5 865.0 617.5C863.8 619.5 862.8 621.8 862.0 624.0C861.2 626.2 860.6 628.3 860.2 631.0C859.8 633.7 859.3 636.4 859.4 640.0C859.5 643.6 860.0 648.5 861.0 652.7C862.0 656.9 863.5 661.6 865.3 665.4C867.1 669.2 869.5 672.4 872.0 675.5C874.5 678.6 877.2 681.5 880.5 684.0C883.8 686.5 887.7 689.0 891.5 690.8C895.3 692.6 899.3 694.1 903.4 695.0C907.5 695.9 912.4 696.2 916.0 696.3C919.6 696.4 922.5 695.9 925.0 695.5C927.5 695.1 929.5 694.5 931.2 693.9C932.9 693.3 933.1 692.9 935.0 692.0C936.9 691.1 940.3 689.7 942.5 688.5C944.7 687.3 946.2 686.5 948.0 685.0C949.8 683.5 951.7 681.6 953.0 679.5C954.3 677.4 955.4 674.4 956.0 672.5C956.6 670.6 956.5 669.6 956.5 668.0C956.5 666.4 956.4 664.6 956.0 663.0C955.6 661.4 955.0 660.2 954.0 658.5C953.0 656.8 951.5 654.7 950.0 653.0C948.5 651.3 945.8 649.2 945.0 648.5L951.5 655.5C950.4 656.9 947.5 660.8 945.0 664.0C942.5 667.2 939.9 672.0 936.4 674.9C932.9 677.8 927.1 680.0 923.7 681.2C920.3 682.4 918.8 682.0 916.0 682.3C913.2 682.5 910.0 683.1 906.8 682.7C903.6 682.3 899.7 681.0 896.6 679.8C893.5 678.6 890.8 677.2 888.1 675.5C885.4 673.8 883.0 671.9 880.5 669.6C878.0 667.4 875.4 664.8 873.0 662.0C870.6 659.2 867.9 655.7 866.0 652.7C864.1 649.7 862.6 646.6 861.5 644.0C860.4 641.4 859.9 638.2 859.6 637.0Z"/></clipPath>
</defs>
<ellipse cx="926" cy="696" rx="67" ry="12" fill="url(#gsh)"/>
<clipPath id="cband0"><path d="M912.0 580.0C912.9 579.5 915.5 578.7 917.2 577.2C918.9 575.7 920.2 572.9 922.0 571.2C923.8 569.5 926.0 568.0 928.0 567.0C930.0 566.0 932.0 565.4 934.0 564.9C936.0 564.4 938.6 564.0 940.0 564.0C941.4 564.0 940.8 564.3 942.5 564.7C944.2 565.1 947.5 565.3 950.0 566.2C952.5 567.1 955.2 568.5 957.5 570.0C959.8 571.5 962.1 573.6 964.0 575.5C965.9 577.4 967.8 579.8 969.0 581.5C970.2 583.2 971.1 585.2 971.5 586.0L967.0 591.0C966.5 590.2 965.2 587.5 964.0 586.0C962.8 584.5 961.3 583.2 960.0 582.0C958.7 580.8 957.5 579.6 956.0 578.5C954.5 577.4 952.8 576.4 951.0 575.5C949.2 574.6 947.2 573.6 945.0 573.0C942.8 572.4 939.3 572.1 937.5 572.0C935.7 571.9 935.2 572.1 934.0 572.3C932.8 572.5 931.5 572.6 930.0 573.0C928.5 573.4 926.7 573.5 925.0 574.5C923.3 575.5 921.8 577.1 920.0 579.0C918.2 580.9 915.0 584.8 914.0 586.0Z"/></clipPath>
<g clip-path="url(#cband0)"><path d="M912.0 580.0C912.9 579.5 915.5 578.7 917.2 577.2C918.9 575.7 920.2 572.9 922.0 571.2C923.8 569.5 926.0 568.0 928.0 567.0C930.0 566.0 932.0 565.4 934.0 564.9C936.0 564.4 938.6 564.0 940.0 564.0C941.4 564.0 940.8 564.3 942.5 564.7C944.2 565.1 947.5 565.3 950.0 566.2C952.5 567.1 955.2 568.5 957.5 570.0C959.8 571.5 962.1 573.6 964.0 575.5C965.9 577.4 967.8 579.8 969.0 581.5C970.2 583.2 971.1 585.2 971.5 586.0L967.0 591.0C966.5 590.2 965.2 587.5 964.0 586.0C962.8 584.5 961.3 583.2 960.0 582.0C958.7 580.8 957.5 579.6 956.0 578.5C954.5 577.4 952.8 576.4 951.0 575.5C949.2 574.6 947.2 573.6 945.0 573.0C942.8 572.4 939.3 572.1 937.5 572.0C935.7 571.9 935.2 572.1 934.0 572.3C932.8 572.5 931.5 572.6 930.0 573.0C928.5 573.4 926.7 573.5 925.0 574.5C923.3 575.5 921.8 577.1 920.0 579.0C918.2 580.9 915.0 584.8 914.0 586.0Z" fill="#14021e"/>
<path d="M913.0 583.0C913.9 582.2 916.9 579.8 918.6 578.1C920.4 576.4 921.8 574.2 923.5 572.9C925.2 571.5 927.2 570.7 929.0 570.0C930.8 569.3 932.4 568.9 934.0 568.6C935.6 568.3 937.1 568.0 938.8 568.0C940.4 568.0 941.8 568.4 943.8 568.9C945.7 569.3 948.3 570.0 950.5 570.9C952.7 571.8 954.8 572.9 956.8 574.2C958.7 575.6 960.4 577.2 962.0 578.8C963.6 580.3 965.3 582.1 966.5 583.8C967.7 585.4 968.8 587.7 969.2 588.5" fill="none" stroke="#86042e" stroke-width="3.6" filter="url(#b2)"/></g>
<clipPath id="cband1"><path d="M976.0 638.0C976.7 639.6 979.3 644.7 980.3 647.5C981.3 650.3 981.8 652.5 982.0 655.0C982.2 657.5 981.9 660.2 981.5 662.5C981.1 664.8 980.6 666.7 979.5 669.0C978.4 671.3 976.6 674.3 975.0 676.5C973.4 678.7 972.0 680.3 970.0 682.0C968.0 683.7 965.5 685.4 963.0 686.5C960.5 687.6 958.2 688.2 955.0 688.5C951.8 688.8 945.8 688.1 944.0 688.0L944.0 681.0C945.4 680.9 949.8 680.9 952.5 680.5C955.2 680.1 957.8 679.4 960.0 678.5C962.2 677.6 964.3 676.4 966.0 675.0C967.7 673.6 969.0 671.5 970.0 670.0C971.0 668.5 971.3 667.5 972.0 666.0C972.7 664.5 973.4 662.8 974.0 661.0C974.6 659.2 975.3 657.2 975.5 655.0C975.7 652.8 975.8 650.7 975.0 647.5C974.2 644.3 971.7 637.9 971.0 636.0Z"/></clipPath>
<g clip-path="url(#cband1)"><path d="M976.0 638.0C976.7 639.6 979.3 644.7 980.3 647.5C981.3 650.3 981.8 652.5 982.0 655.0C982.2 657.5 981.9 660.2 981.5 662.5C981.1 664.8 980.6 666.7 979.5 669.0C978.4 671.3 976.6 674.3 975.0 676.5C973.4 678.7 972.0 680.3 970.0 682.0C968.0 683.7 965.5 685.4 963.0 686.5C960.5 687.6 958.2 688.2 955.0 688.5C951.8 688.8 945.8 688.1 944.0 688.0L944.0 681.0C945.4 680.9 949.8 680.9 952.5 680.5C955.2 680.1 957.8 679.4 960.0 678.5C962.2 677.6 964.3 676.4 966.0 675.0C967.7 673.6 969.0 671.5 970.0 670.0C971.0 668.5 971.3 667.5 972.0 666.0C972.7 664.5 973.4 662.8 974.0 661.0C974.6 659.2 975.3 657.2 975.5 655.0C975.7 652.8 975.8 650.7 975.0 647.5C974.2 644.3 971.7 637.9 971.0 636.0Z" fill="#14021e"/>
<path d="M973.5 637.0C974.2 638.8 976.8 644.5 977.6 647.5C978.5 650.5 978.7 652.6 978.8 655.0C978.8 657.4 978.2 659.7 977.8 661.8C977.2 663.8 976.6 665.6 975.8 667.5C974.9 669.4 973.8 671.4 972.5 673.2C971.2 675.1 969.8 677.0 968.0 678.5C966.2 680.0 963.9 681.5 961.5 682.5C959.1 683.5 956.7 684.2 953.8 684.5C950.8 684.8 945.6 684.5 944.0 684.5" fill="none" stroke="#86042e" stroke-width="3.6" filter="url(#b2)"/></g>
<clipPath id="cband2"><path d="M871.0 610.0C870.0 611.2 866.5 615.2 865.0 617.5C863.5 619.8 862.8 621.8 862.0 624.0C861.2 626.2 860.7 628.8 860.5 631.0C860.3 633.2 860.8 635.3 861.0 637.5C861.2 639.7 861.0 641.5 862.0 644.2C863.0 646.9 864.9 650.8 867.0 653.5C869.1 656.2 871.8 658.5 874.6 660.3C877.4 662.1 880.8 663.6 884.0 664.5C887.2 665.4 890.8 665.5 894.0 665.4C897.2 665.3 900.6 664.6 903.4 663.7C906.2 662.8 909.7 660.6 911.0 660.0L912.0 655.0C911.7 655.3 911.3 656.2 910.0 657.0C908.7 657.8 906.0 658.8 904.0 659.5C902.0 660.2 900.3 660.8 898.0 661.0C895.7 661.2 892.7 661.2 890.0 660.5C887.3 659.8 884.3 658.5 882.0 657.0C879.7 655.5 877.7 653.5 876.0 651.5C874.3 649.5 873.0 647.3 872.0 645.0C871.0 642.7 870.3 640.0 870.0 637.5C869.7 635.0 870.0 632.6 870.0 630.0C870.0 627.4 869.9 625.2 870.2 622.0C870.5 618.8 871.7 612.8 872.0 611.0Z"/></clipPath>
<g clip-path="url(#cband2)"><path d="M871.0 610.0C870.0 611.2 866.5 615.2 865.0 617.5C863.5 619.8 862.8 621.8 862.0 624.0C861.2 626.2 860.7 628.8 860.5 631.0C860.3 633.2 860.8 635.3 861.0 637.5C861.2 639.7 861.0 641.5 862.0 644.2C863.0 646.9 864.9 650.8 867.0 653.5C869.1 656.2 871.8 658.5 874.6 660.3C877.4 662.1 880.8 663.6 884.0 664.5C887.2 665.4 890.8 665.5 894.0 665.4C897.2 665.3 900.6 664.6 903.4 663.7C906.2 662.8 909.7 660.6 911.0 660.0L912.0 655.0C911.7 655.3 911.3 656.2 910.0 657.0C908.7 657.8 906.0 658.8 904.0 659.5C902.0 660.2 900.3 660.8 898.0 661.0C895.7 661.2 892.7 661.2 890.0 660.5C887.3 659.8 884.3 658.5 882.0 657.0C879.7 655.5 877.7 653.5 876.0 651.5C874.3 649.5 873.0 647.3 872.0 645.0C871.0 642.7 870.3 640.0 870.0 637.5C869.7 635.0 870.0 632.6 870.0 630.0C870.0 627.4 869.9 625.2 870.2 622.0C870.5 618.8 871.7 612.8 872.0 611.0Z" fill="#14021e"/>
<path d="M871.5 610.5C870.9 612.0 868.5 617.0 867.6 619.8C866.7 622.5 866.4 624.6 866.0 627.0C865.6 629.4 865.2 631.9 865.2 634.2C865.3 636.6 865.9 639.0 866.5 641.2C867.1 643.5 867.7 645.5 869.0 647.9C870.3 650.2 872.3 653.2 874.5 655.2C876.7 657.3 879.5 659.1 882.3 660.4C885.0 661.6 888.2 662.4 891.0 662.8C893.8 663.1 896.4 662.9 899.0 662.5C901.6 662.1 904.6 661.2 906.7 660.4C908.8 659.5 910.7 658.0 911.5 657.5" fill="none" stroke="#86042e" stroke-width="3.6" filter="url(#b2)"/></g>
<clipPath id="cbody"><path d="M925.0 575.5C927.3 575.0 926.5 574.9 927.7 575.0C929.0 575.1 930.5 575.6 932.5 576.0C934.5 576.4 937.8 576.6 940.0 577.2C942.2 577.8 944.2 578.8 946.0 579.5C947.8 580.2 949.5 581.0 951.0 581.5C952.5 582.0 953.5 582.5 955.0 582.7C956.5 582.9 957.8 581.3 960.0 582.5C962.2 583.7 965.3 586.1 968.0 590.0C970.7 593.9 974.0 600.2 976.0 606.0C978.0 611.8 979.5 618.5 980.0 625.0C980.5 631.5 979.8 639.8 979.0 645.0C978.2 650.2 976.7 652.7 975.0 656.0C973.3 659.3 972.0 661.9 969.0 665.0C966.0 668.1 961.0 671.5 957.0 674.5C953.0 677.5 950.3 681.4 945.0 683.0C939.7 684.6 931.7 685.8 925.0 684.0C918.3 682.2 910.3 675.7 905.0 672.0C899.7 668.3 896.0 664.1 893.0 662.0C890.0 659.9 888.8 660.4 887.0 659.5C885.2 658.6 883.4 658.1 882.0 656.5C880.6 654.9 879.5 652.3 878.5 650.0C877.5 647.7 876.6 644.8 876.0 642.5C875.4 640.2 875.2 638.6 875.0 636.5C874.8 634.4 874.4 632.8 874.5 630.0C874.6 627.2 873.9 625.0 875.5 620.0C877.1 615.0 879.9 605.8 884.0 600.0C888.1 594.2 895.0 588.7 900.0 585.0C905.0 581.3 909.8 579.6 914.0 578.0C918.2 576.4 922.7 576.0 925.0 575.5Z"/></clipPath>
<path d="M925.0 575.5C927.3 575.0 926.5 574.9 927.7 575.0C929.0 575.1 930.5 575.6 932.5 576.0C934.5 576.4 937.8 576.6 940.0 577.2C942.2 577.8 944.2 578.8 946.0 579.5C947.8 580.2 949.5 581.0 951.0 581.5C952.5 582.0 953.5 582.5 955.0 582.7C956.5 582.9 957.8 581.3 960.0 582.5C962.2 583.7 965.3 586.1 968.0 590.0C970.7 593.9 974.0 600.2 976.0 606.0C978.0 611.8 979.5 618.5 980.0 625.0C980.5 631.5 979.8 639.8 979.0 645.0C978.2 650.2 976.7 652.7 975.0 656.0C973.3 659.3 972.0 661.9 969.0 665.0C966.0 668.1 961.0 671.5 957.0 674.5C953.0 677.5 950.3 681.4 945.0 683.0C939.7 684.6 931.7 685.8 925.0 684.0C918.3 682.2 910.3 675.7 905.0 672.0C899.7 668.3 896.0 664.1 893.0 662.0C890.0 659.9 888.8 660.4 887.0 659.5C885.2 658.6 883.4 658.1 882.0 656.5C880.6 654.9 879.5 652.3 878.5 650.0C877.5 647.7 876.6 644.8 876.0 642.5C875.4 640.2 875.2 638.6 875.0 636.5C874.8 634.4 874.4 632.8 874.5 630.0C874.6 627.2 873.9 625.0 875.5 620.0C877.1 615.0 879.9 605.8 884.0 600.0C888.1 594.2 895.0 588.7 900.0 585.0C905.0 581.3 909.8 579.6 914.0 578.0C918.2 576.4 922.7 576.0 925.0 575.5Z" fill="url(#gbody)"/>
<path d="M905.0 633.5C906.0 632.8 909.3 631.1 910.9 629.0C912.5 626.9 914.2 624.1 914.7 621.1C915.2 618.1 914.5 614.3 914.0 610.9C913.5 607.5 911.9 603.6 911.5 600.8C911.1 598.0 911.4 596.5 911.8 594.0C912.1 591.5 912.7 588.4 913.6 585.6C914.5 582.8 915.8 579.6 917.2 577.2C918.6 574.8 920.2 572.9 922.0 571.2C923.8 569.5 926.0 568.0 928.0 567.0C930.0 566.0 932.0 565.4 934.0 564.9C936.0 564.4 939.0 564.1 940.0 564.0" fill="none" stroke="#10021a" stroke-width="9" opacity=".85" filter="url(#b1)" clip-path="url(#cbody)"/>
<path d="M935.8 605.7C936.3 607.3 937.2 612.6 938.9 615.4C940.6 618.2 943.1 620.6 945.9 622.4C948.7 624.1 952.5 624.9 955.5 625.9C958.5 626.9 961.4 627.2 964.2 628.5C967.0 629.8 969.9 631.8 972.1 633.7C974.3 635.6 976.0 637.6 977.4 639.9C978.8 642.2 979.5 645.0 980.3 647.5C981.1 650.0 981.8 652.5 982.0 655.0C982.2 657.5 981.9 660.2 981.5 662.5C981.1 664.8 980.6 666.7 979.5 669.0C978.4 671.3 976.6 674.3 975.0 676.5C973.4 678.7 972.0 680.3 970.0 682.0C968.0 683.7 965.5 685.4 963.0 686.5C960.5 687.6 958.0 688.1 955.0 688.5C952.0 688.9 946.7 688.9 945.0 689.0" fill="none" stroke="#10021a" stroke-width="9" opacity=".85" filter="url(#b1)" clip-path="url(#cbody)"/>
<path d="M945.0 648.5C943.6 647.9 939.4 645.3 936.4 645.0C933.4 644.7 929.6 645.5 927.0 646.5C924.4 647.5 922.8 649.4 921.0 651.0C919.2 652.6 917.7 654.6 916.0 656.0C914.3 657.4 913.1 658.2 911.0 659.5C908.9 660.8 906.2 662.7 903.4 663.7C900.6 664.7 897.2 665.3 894.0 665.4C890.8 665.5 887.2 665.4 884.0 664.5C880.8 663.6 877.4 662.1 874.6 660.3C871.8 658.5 869.1 656.2 867.0 653.5C864.9 650.8 863.0 646.9 862.0 644.2C861.0 641.5 861.1 639.7 861.0 637.5C860.9 635.3 861.0 633.2 861.3 631.0C861.6 628.8 862.2 626.2 863.0 624.0C863.8 621.8 864.9 619.5 866.0 617.5C867.1 615.5 868.9 612.9 869.5 612.0" fill="none" stroke="#10021a" stroke-width="9" opacity=".85" filter="url(#b1)" clip-path="url(#cbody)"/>
<g clip-path="url(#cA)">
<rect x="850" y="548" width="151" height="161" fill="url(#gAi)"/>
<path d="M905.0 633.5C906.0 632.8 909.3 631.1 910.9 629.0C912.5 626.9 914.2 624.1 914.7 621.1C915.2 618.1 914.5 614.3 914.0 610.9C913.5 607.5 911.9 603.6 911.5 600.8C911.1 598.0 911.4 596.5 911.8 594.0C912.1 591.5 912.7 588.4 913.6 585.6C914.5 582.8 915.8 579.6 917.2 577.2C918.6 574.8 920.2 572.9 922.0 571.2C923.8 569.5 926.0 568.0 928.0 567.0C930.0 566.0 932.0 565.4 934.0 564.9C936.0 564.4 939.0 564.1 940.0 564.0" fill="none" stroke="#cc2414" stroke-width="10" opacity=".8" filter="url(#b1)"/>
<rect x="850" y="548" width="151" height="161" fill="url(#gAt)"/>
<g clip-path="url(#cAb)">
<rect x="850" y="548" width="151" height="161" fill="url(#gAo)"/>
<path d="M944.0 560.0C943.3 559.9 942.2 559.3 940.0 559.3C937.8 559.3 934.0 559.4 931.0 559.8C928.0 560.2 924.9 560.7 922.0 561.6C919.1 562.5 916.4 563.7 913.6 565.2C910.8 566.7 907.8 568.6 905.2 570.6C902.6 572.6 900.2 574.7 898.0 577.2C895.8 579.7 893.7 582.8 892.0 585.6C890.3 588.4 888.9 591.6 887.8 594.0C886.7 596.4 886.0 597.8 885.5 600.0C885.0 602.2 885.0 605.0 885.0 607.5C885.0 610.0 885.2 612.7 885.5 615.0C885.8 617.3 886.3 619.3 887.0 621.5C887.7 623.7 888.6 625.9 889.5 628.0C890.4 630.1 891.8 632.3 892.5 634.0C893.2 635.7 893.8 637.3 894.0 638.0" fill="none" stroke="#d83c18" stroke-width="8" opacity="0.8" filter="url(#b1)"/>
<rect x="850" y="548" width="151" height="161" fill="url(#gAh)"/>
</g>
</g>
<path d="M944.0 560.0C943.3 559.9 942.2 559.3 940.0 559.3C937.8 559.3 934.0 559.4 931.0 559.8C928.0 560.2 924.9 560.7 922.0 561.6C919.1 562.5 916.4 563.7 913.6 565.2C910.8 566.7 907.8 568.6 905.2 570.6C902.6 572.6 900.2 574.7 898.0 577.2C895.8 579.7 893.7 582.8 892.0 585.6C890.3 588.4 888.9 591.6 887.8 594.0C886.7 596.4 886.0 597.8 885.5 600.0C885.0 602.2 885.0 605.0 885.0 607.5C885.0 610.0 885.2 612.7 885.5 615.0C885.8 617.3 886.3 619.3 887.0 621.5C887.7 623.7 888.6 625.9 889.5 628.0C890.4 630.1 891.8 632.3 892.5 634.0C893.2 635.7 893.8 637.3 894.0 638.0" fill="none" stroke="#fff4d0" stroke-width="1.25" opacity=".95"/>
<path d="M905.0 633.5C906.0 632.8 909.3 631.1 910.9 629.0C912.5 626.9 914.2 624.1 914.7 621.1C915.2 618.1 914.5 614.3 914.0 610.9C913.5 607.5 911.9 603.6 911.5 600.8C911.1 598.0 911.4 596.5 911.8 594.0C912.1 591.5 912.7 588.4 913.6 585.6C914.5 582.8 915.8 579.6 917.2 577.2C918.6 574.8 920.2 572.9 922.0 571.2C923.8 569.5 926.0 568.0 928.0 567.0C930.0 566.0 932.0 565.4 934.0 564.9C936.0 564.4 939.0 564.1 940.0 564.0" fill="none" stroke="#ffd860" stroke-width=".9" opacity=".9"/>
<g clip-path="url(#cB)">
<rect x="850" y="548" width="151" height="161" fill="url(#gBi)"/>
<path d="M935.8 605.7C936.3 607.3 937.2 612.6 938.9 615.4C940.6 618.2 943.1 620.6 945.9 622.4C948.7 624.1 952.5 624.9 955.5 625.9C958.5 626.9 961.4 627.2 964.2 628.5C967.0 629.8 969.9 631.8 972.1 633.7C974.3 635.6 976.0 637.6 977.4 639.9C978.8 642.2 979.5 645.0 980.3 647.5C981.1 650.0 981.8 652.5 982.0 655.0C982.2 657.5 981.9 660.2 981.5 662.5C981.1 664.8 980.6 666.7 979.5 669.0C978.4 671.3 976.6 674.3 975.0 676.5C973.4 678.7 972.0 680.3 970.0 682.0C968.0 683.7 965.5 685.4 963.0 686.5C960.5 687.6 958.0 688.1 955.0 688.5C952.0 688.9 946.7 688.9 945.0 689.0" fill="none" stroke="#cc2414" stroke-width="10" opacity=".8" filter="url(#b1)"/>
<g clip-path="url(#cBb)">
<rect x="850" y="548" width="151" height="161" fill="url(#gBo)"/>
<path d="M937.5 598.0C939.3 597.7 944.9 595.8 948.5 596.1C952.1 596.4 955.5 598.0 959.0 599.6C962.5 601.2 966.3 603.5 969.5 605.7C972.7 607.9 975.6 610.1 978.2 612.7C980.8 615.3 983.3 618.3 985.2 621.5C987.1 624.7 988.6 628.8 989.6 632.0C990.6 635.2 991.2 638.0 991.4 641.0C991.6 644.0 991.3 647.0 990.8 650.0C990.3 653.0 989.5 656.2 988.5 659.0C987.5 661.8 986.3 664.4 985.0 667.0C983.7 669.6 982.2 672.2 980.5 674.5C978.8 676.8 977.1 678.7 975.0 680.5C972.9 682.3 969.2 684.7 968.0 685.5" fill="none" stroke="#ea6a12" stroke-width="8" opacity="0.8" filter="url(#b1)"/>
</g>
<rect x="850" y="548" width="151" height="161" fill="url(#gBt)"/>
</g>
<path d="M937.5 598.0C939.3 597.7 944.9 595.8 948.5 596.1C952.1 596.4 955.5 598.0 959.0 599.6C962.5 601.2 966.3 603.5 969.5 605.7C972.7 607.9 975.6 610.1 978.2 612.7C980.8 615.3 983.3 618.3 985.2 621.5C987.1 624.7 988.6 628.8 989.6 632.0C990.6 635.2 991.2 638.0 991.4 641.0C991.6 644.0 991.3 647.0 990.8 650.0C990.3 653.0 989.5 656.2 988.5 659.0C987.5 661.8 986.3 664.4 985.0 667.0C983.7 669.6 982.2 672.2 980.5 674.5C978.8 676.8 977.1 678.7 975.0 680.5C972.9 682.3 969.2 684.7 968.0 685.5" fill="none" stroke="#fff4d0" stroke-width="1.25" opacity=".95"/>
<path d="M935.8 605.7C936.3 607.3 937.2 612.6 938.9 615.4C940.6 618.2 943.1 620.6 945.9 622.4C948.7 624.1 952.5 624.9 955.5 625.9C958.5 626.9 961.4 627.2 964.2 628.5C967.0 629.8 969.9 631.8 972.1 633.7C974.3 635.6 976.0 637.6 977.4 639.9C978.8 642.2 979.5 645.0 980.3 647.5C981.1 650.0 981.8 652.5 982.0 655.0C982.2 657.5 981.9 660.2 981.5 662.5C981.1 664.8 980.6 666.7 979.5 669.0C978.4 671.3 976.6 674.3 975.0 676.5C973.4 678.7 972.0 680.3 970.0 682.0C968.0 683.7 965.5 685.4 963.0 686.5C960.5 687.6 958.0 688.1 955.0 688.5C952.0 688.9 946.7 688.9 945.0 689.0" fill="none" stroke="#ffd860" stroke-width=".9" opacity=".9"/>
<g clip-path="url(#cC)">
<rect x="850" y="548" width="151" height="161" fill="url(#gCi)"/>
<path d="M945.0 648.5C943.6 647.9 939.4 645.3 936.4 645.0C933.4 644.7 929.6 645.5 927.0 646.5C924.4 647.5 922.8 649.4 921.0 651.0C919.2 652.6 917.7 654.6 916.0 656.0C914.3 657.4 913.1 658.2 911.0 659.5C908.9 660.8 906.2 662.7 903.4 663.7C900.6 664.7 897.2 665.3 894.0 665.4C890.8 665.5 887.2 665.4 884.0 664.5C880.8 663.6 877.4 662.1 874.6 660.3C871.8 658.5 869.1 656.2 867.0 653.5C864.9 650.8 863.0 646.9 862.0 644.2C861.0 641.5 861.1 639.7 861.0 637.5C860.9 635.3 861.0 633.2 861.3 631.0C861.6 628.8 862.2 626.2 863.0 624.0C863.8 621.8 864.9 619.5 866.0 617.5C867.1 615.5 868.9 612.9 869.5 612.0" fill="none" stroke="#cc2414" stroke-width="10" opacity=".8" filter="url(#b1)"/>
<g clip-path="url(#cCb)">
<rect x="850" y="548" width="151" height="161" fill="url(#gCo)"/>
<path d="M869.5 612.0C868.8 612.9 866.2 615.5 865.0 617.5C863.8 619.5 862.8 621.8 862.0 624.0C861.2 626.2 860.6 628.3 860.2 631.0C859.8 633.7 859.3 636.4 859.4 640.0C859.5 643.6 860.0 648.5 861.0 652.7C862.0 656.9 863.5 661.6 865.3 665.4C867.1 669.2 869.5 672.4 872.0 675.5C874.5 678.6 877.2 681.5 880.5 684.0C883.8 686.5 887.7 689.0 891.5 690.8C895.3 692.6 899.3 694.1 903.4 695.0C907.5 695.9 912.4 696.2 916.0 696.3C919.6 696.4 922.5 695.9 925.0 695.5C927.5 695.1 929.5 694.5 931.2 693.9C932.9 693.3 933.1 692.9 935.0 692.0C936.9 691.1 940.3 689.7 942.5 688.5C944.7 687.3 946.2 686.5 948.0 685.0C949.8 683.5 951.7 681.6 953.0 679.5C954.3 677.4 955.4 674.4 956.0 672.5C956.6 670.6 956.5 669.6 956.5 668.0C956.5 666.4 956.4 664.6 956.0 663.0C955.6 661.4 955.0 660.2 954.0 658.5C953.0 656.8 951.5 654.7 950.0 653.0C948.5 651.3 945.8 649.2 945.0 648.5" fill="none" stroke="#ea6412" stroke-width="6" opacity="0.5" filter="url(#b1)"/>
</g>
</g>
<path d="M951.5 655.5C950.4 656.9 947.5 660.8 945.0 664.0C942.5 667.2 939.9 672.0 936.4 674.9C932.9 677.8 927.1 680.0 923.7 681.2C920.3 682.4 918.8 682.0 916.0 682.3C913.2 682.5 910.0 683.1 906.8 682.7C903.6 682.3 899.7 681.0 896.6 679.8C893.5 678.6 890.8 677.2 888.1 675.5C885.4 673.8 883.0 671.9 880.5 669.6C878.0 667.4 875.4 664.8 873.0 662.0C870.6 659.2 867.9 655.7 866.0 652.7C864.1 649.7 862.6 646.6 861.5 644.0C860.4 641.4 859.9 638.2 859.6 637.0" fill="none" stroke="#fff4d0" stroke-width="1.25" opacity=".95"/>
<path d="M945.0 648.5C943.6 647.9 939.4 645.3 936.4 645.0C933.4 644.7 929.6 645.5 927.0 646.5C924.4 647.5 922.8 649.4 921.0 651.0C919.2 652.6 917.7 654.6 916.0 656.0C914.3 657.4 913.1 658.2 911.0 659.5C908.9 660.8 906.2 662.7 903.4 663.7C900.6 664.7 897.2 665.3 894.0 665.4C890.8 665.5 887.2 665.4 884.0 664.5C880.8 663.6 877.4 662.1 874.6 660.3C871.8 658.5 869.1 656.2 867.0 653.5C864.9 650.8 863.0 646.9 862.0 644.2C861.0 641.5 861.1 639.7 861.0 637.5C860.9 635.3 861.0 633.2 861.3 631.0C861.6 628.8 862.2 626.2 863.0 624.0C863.8 621.8 864.9 619.5 866.0 617.5C867.1 615.5 868.9 612.9 869.5 612.0" fill="none" stroke="#ffd860" stroke-width=".9" opacity=".9"/>
</svg>
</div>
</body></html>
